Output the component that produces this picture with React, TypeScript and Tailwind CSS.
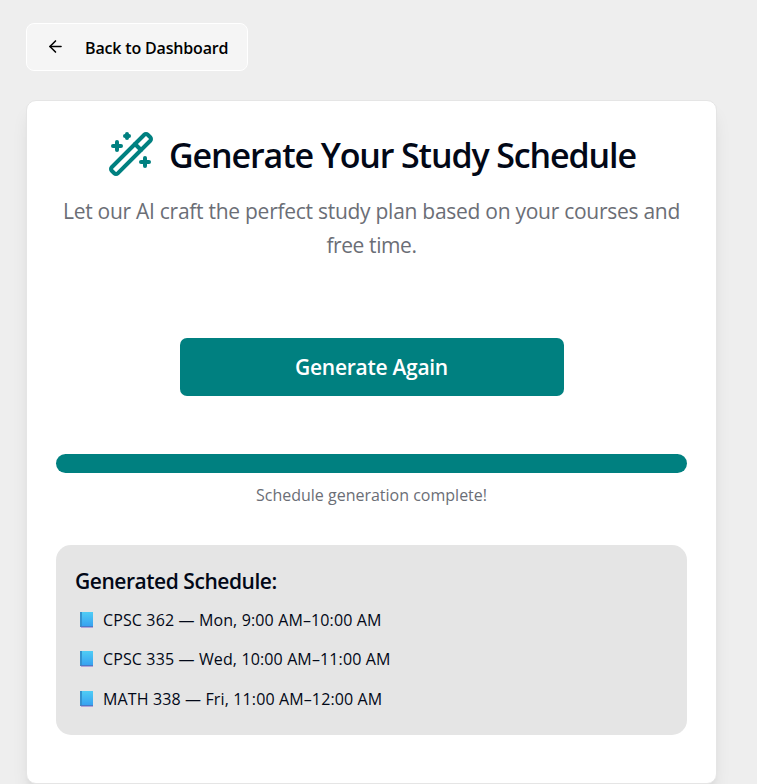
import { ArrowLeft, WandSparkles } from "lucide-react";

const sessions = [
  "CPSC 362 — Mon, 9:00 AM–10:00 AM",
  "CPSC 335 — Wed, 10:00 AM–11:00 AM",
  "MATH 338 — Fri, 11:00 AM–12:00 AM",
];

function BookIcon() {
  return (
    <svg width="13" height="16" viewBox="0 0 13 16" className="shrink-0">
      <defs>
        <linearGradient id="cover" x1="0" y1="0" x2="0" y2="1">
          <stop offset="0" stopColor="#50cdf5" />
          <stop offset="1" stopColor="#369ff0" />
        </linearGradient>
      </defs>
      <rect width="13" height="15" fill="url(#cover)" />
      <rect width="2" height="15" fill="#3593cf" />
      <rect y="14" width="13" height="1" fill="#4a7cc4" />
      <rect x="1" y="15" width="12" height="1" fill="#b0a3da" />
    </svg>
  );
}

export default function App() {
  return (
    <div className="h-[784px] overflow-hidden bg-[#eeeeee] pl-[26px] pt-[23px] font-['Open_Sans','Noto_Sans',sans-serif] text-[#020817]">
      <button className="flex h-12 w-[222px] items-center rounded-lg border border-white bg-[#f5f5f5] pl-[19px] text-black">
        <ArrowLeft size={19} strokeWidth={2} className="mr-5 -mt-px shrink-0" />
        <span className="whitespace-nowrap pt-0.5 text-[16px] font-semibold tracking-[-0.17px]">Back to Dashboard</span>
      </button>
      <main className="mt-[29px] flex h-[684px] w-[691px] flex-col rounded-[10px] border border-[#e5e5e5] bg-white px-[29px] shadow-[0_12px_18px_-4px_rgba(0,0,0,0.1),0_5px_7px_-5px_rgba(0,0,0,0.1)]">
        <header className="pt-[29px] text-center">
          <h1 className="flex h-12 items-center pl-[51px]">
            <WandSparkles size={48} strokeWidth={2} className="mr-[14px] shrink-0 text-[#008080]" />
            <span className="whitespace-nowrap pt-px text-[34px] font-semibold leading-[48px] tracking-[-1.12px] text-[#020817]">Generate Your Study Schedule</span>
          </h1>
          <p className="mt-4 text-[21px] leading-[34px] text-[#6b6e76]">
            <span className="block whitespace-nowrap tracking-[-0.27px]">Let our AI craft the perfect study plan based on your courses and</span>
            <span className="block tracking-[-0.4px]">free time.</span>
          </p>
        </header>
        <button className="mx-auto mt-[76px] h-[58px] w-96 shrink-0 rounded-[7px] bg-[#008080] pt-0.5 text-[21px] font-semibold tracking-[-0.28px] text-white">
          Generate Again
        </button>
        <div className="mt-[58px] h-[19px] shrink-0 rounded-full bg-[#008080]" />
        <p className="mt-[10px] text-center text-[16px] leading-6 text-[#6b6e76]">Schedule generation complete!</p>
        <section className="mt-[38px] h-[190px] shrink-0 rounded-[15px] bg-[#e5e5e5] px-[19px] pt-[19px]">
          <h2 className="text-[21px] font-semibold leading-[34px] tracking-[-0.46px]">Generated Schedule:</h2>
          <ul className="mt-[4.8px] flex flex-col">
            {sessions.map((session) => (
              <li key={session} className="flex h-[39.4px] items-start gap-[10px] pl-[5px] text-[16px] leading-[34px]">
                <span className="flex h-[34px] items-center"><BookIcon /></span>
                <span className="whitespace-nowrap tracking-[0.13px]">{session}</span>
              </li>
            ))}
          </ul>
        </section>
      </main>
    </div>
  );
}
